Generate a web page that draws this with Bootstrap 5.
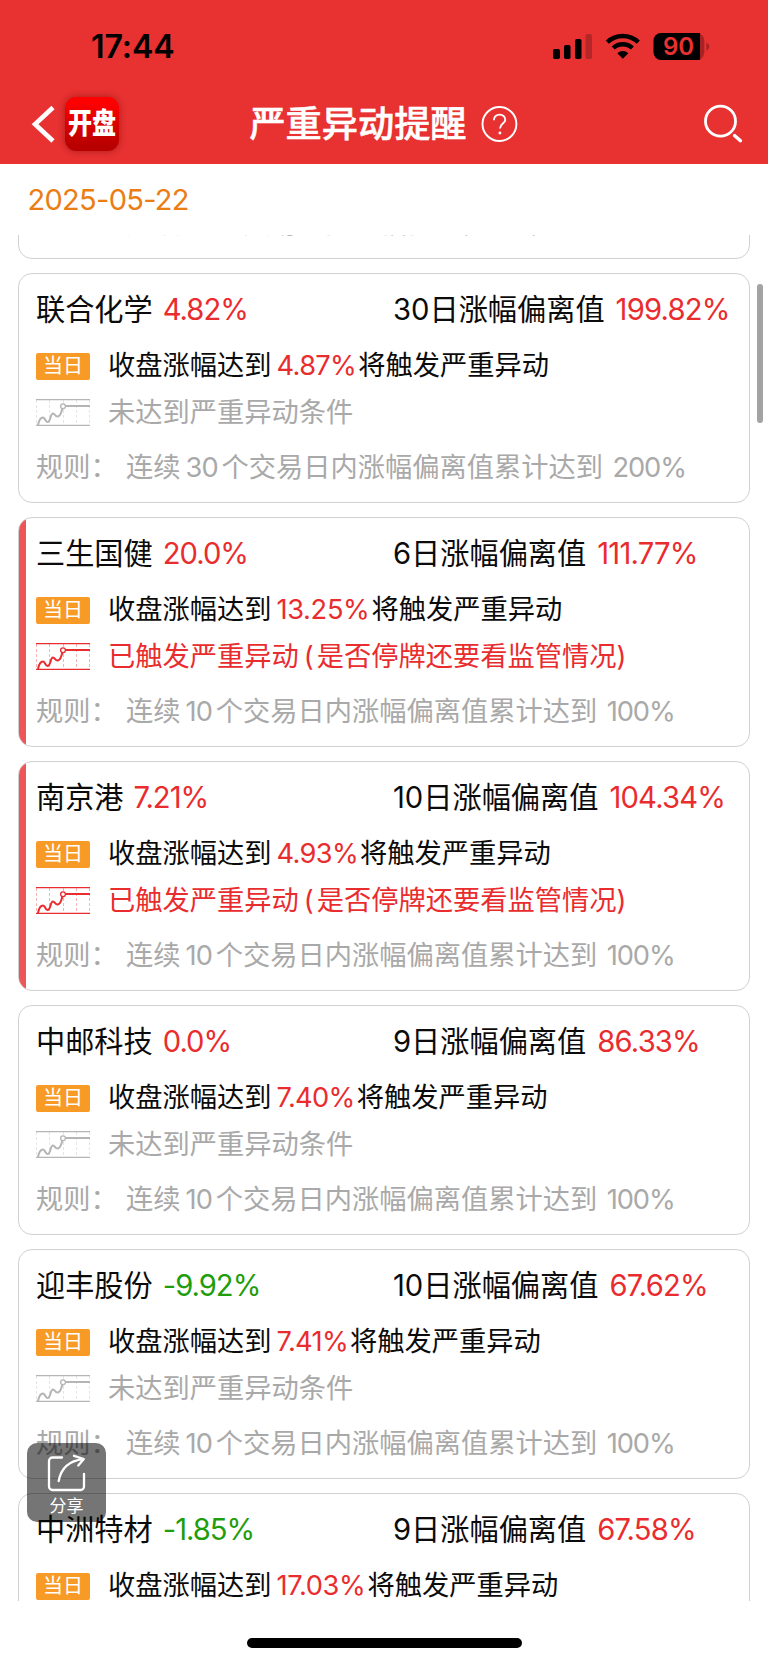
<!DOCTYPE html>
<html lang="zh-CN">
<head>
<meta charset="utf-8">
<meta name="viewport" content="width=device-width, initial-scale=1">
<title>严重异动提醒</title>
<link href="https://cdn.jsdelivr.net/npm/bootstrap@5.3.0/dist/css/bootstrap.min.css" rel="stylesheet">
<style>
  body { width: 768px; height: 1662px; overflow: hidden; background: #fff; color: #0b0b0b; font-family: Inter, "Noto Sans CJK SC", sans-serif; font-size: 27.25px; line-height: 40px; }
  .topbar { height: 163.5px; background: #e83131; color: #fff; }
  .status { height: 85px; padding: 8px 58px 0 91px; color: #000; }
  .clock { font-size: 32.2px; font-weight: 600; letter-spacing: -.1px; }
  .titlebar { height: 78px; padding: 0 25px 0 31px; }
  .app-logo { width: 54px; height: 54px; border-radius: 11px; background: linear-gradient(#ff0000 10%, #b80000 90%); box-shadow: 0 0 7px rgba(90,0,0,.45); font-size: 29px; font-weight: 900; line-height: 54px; }
  .app-logo span { display: block; transform: scaleX(.83); margin: 0 -6px; text-align: center; white-space: nowrap; }
  .title-group { padding-left: 7px; }
  .page-title { font-size: 36.2px; font-weight: 500; line-height: 46px; -webkit-text-stroke: .5px #fff; }
  .date-row { height: 71.5px; padding: 0 27.5px; color: #ea7d14; font-size: 29px; letter-spacing: -.7px; line-height: 71.5px; }
  .feed { height: 1366px; padding: 0 18px; overflow: hidden; }
  .feed-inner { margin-top: -206px; gap: 14px; }
  .stock { height: 230px; flex: none; border: 1px solid #d0d0d0; border-radius: 14px; padding: 8px 17px 0; overflow: hidden; background: #fff; white-space: nowrap; }
  .stock.hit::before { content: ""; position: absolute; left: 0; top: 0; bottom: 0; width: 6.5px; background: #ee5558; }
  .line-head { height: 56px; font-size: 29.2px; }
  .line-head .who { width: 357px; }
  .line-head .num { margin-left: 11px; letter-spacing: -.8px; }
  .line-head .who .num { margin-left: 10px; letter-spacing: -1px; }
  .line-day { height: 56px; }
  .line-state { height: 37px; }
  .line-rule { height: 73px; color: #a9a9a9; }
  .num { color: #e92c2e; letter-spacing: -.65px; }
  .num.down { color: #1f9d0c; }
  .line-day .num { margin: 0 2px 0 5px; }
  .line-day .num.long { letter-spacing: -.35px; }
  .tag { width: 54px; height: 27px; margin-right: 18px; border-radius: 2px; background: #f79a26; color: #fff; font-size: 20px; line-height: 27px; text-align: center; }
  .spark { width: 54px; height: 27px; margin-right: 18px; color: #b5b5b5; flex: none; }
  .muted { color: #a9a9a9; }
  .hit .spark, .alert-text { color: #e92c2e; }
  .paren { margin: 0 3px 0 5px; }
  .rule-label { width: 90px; }
  .days { margin: 0 3.5px 0 5px; letter-spacing: -.8px; }
  .limit { margin-left: 9.5px; letter-spacing: -1.1px; }
  .thumb { left: 757px; top: 284px; width: 6px; height: 139px; border-radius: 3px; background: #a3a3a3; }
  .share { left: 27px; top: 1442.5px; width: 79px; height: 79px; border-radius: 10px; background: rgba(0,0,0,.54); color: #fff; font-size: 17px; line-height: 21px; }
  .home-bar { width: 275px; height: 10px; margin: 37px auto 0; border-radius: 5px; background: #000; }
</style>
</head>
<body class="position-relative">
<svg class="d-none">
  <symbol id="spark" viewBox="0 0 54 27">
    <path d="M.5 1v25M13.5 1v25M27.5 1v25M40.5 1v25M53.5 1v25" fill="none" stroke="currentColor" stroke-width=".8" stroke-dasharray="3 2" opacity=".45"/>
    <path d="M0 .7h54M0 26.3h54" fill="none" stroke="currentColor" stroke-width="1.200"/>
    <path d="M2 26C3 21 4.500 18.500 7 18.500C9.500 18.500 9 23 11.500 23C15 23 14 14.500 17 14.500C19 14.500 19 18 22 17.500C25 17 25 13 26.500 9.500" fill="none" stroke="currentColor" stroke-width="2"/>
    <path d="M29.500 7H54" stroke="currentColor" stroke-width="2.200"/>
    <circle cx="27" cy="7.300" r="2.400" fill="#fff" stroke="currentColor" stroke-width="1.300"/>
  </symbol>
</svg>

<header class="topbar">
  <div class="status d-flex align-items-center justify-content-between">
    <div class="clock">17:44</div>
    <svg width="158" height="30" viewBox="552 31 158 30">
      <rect x="553" y="48" width="7" height="10" rx="1.800"/><rect x="564" y="44" width="6.500" height="14" rx="1.800"/><rect x="575" y="38" width="6.500" height="20" rx="1.800"/><rect x="585.500" y="33" width="6.500" height="25" rx="1.800" opacity=".22"/>
      <g fill="none" stroke="#000" stroke-width="4.400"><path d="M607.300 41.200a22.500 22.500 0 0 1 31 0"/><path d="M613.200 47a14.200 14.200 0 0 1 19.200 0"/></g>
      <path d="M622.800 57.700l-5.500-5.500a8.200 8.200 0 0 1 11 0z"/>
      <path d="M697 32a7 8 0 0 1 7.300 8v11a7 8 0 0 1-7.300 8z" fill="#a52324"/>
      <path d="M661 32h39v27h-39a7.500 7.500 0 0 1-7.500-7.500v-12A7.500 7.500 0 0 1 661 32z"/>
      <path d="M706.300 41.500q6 4 0 8z" fill="#a52324"/>
      <text x="678.500" y="54.200" text-anchor="middle" font-size="24" font-weight="600" fill="#e83131">90</text>
    </svg>
  </div>
  <div class="titlebar position-relative d-flex align-items-center justify-content-between">
    <div class="d-flex align-items-center">
      <svg width="34" height="40" viewBox="0 0 34 40"><path d="M22 3.500L4 20.200L22 37" fill="none" stroke="#fff" stroke-width="4.600"/></svg>
      <div class="app-logo"><span>开盘</span></div>
    </div>
    <div class="title-group position-absolute start-50 translate-middle-x d-flex align-items-center">
      <div class="page-title">严重异动提醒</div>
      <svg class="ms-2 ps-1" width="51" height="40" viewBox="-1 0 51 40"><g fill="none" stroke="#fff" stroke-width="2.100"><circle cx="21.800" cy="20" r="18.400"/><path d="M15.700 16c0-8.500 12.700-7.800 12.400-.5c-.2 4.300-5.700 4-5.700 9.500"/></g><circle cx="22.300" cy="29.800" r="1.600" fill="#fff"/></svg>
    </div>
    <svg width="40" height="40" viewBox="703 104 40 40" fill="none" stroke="#fff"><circle cx="720.500" cy="121.200" r="15" stroke-width="2.800"/><path d="M734.500 135.500l6 5.200" stroke-width="3.400" stroke-linecap="round"/></svg>
  </div>
</header>

<div class="date-row">2025-05-22</div>

<main class="feed">
  <div class="feed-inner d-flex flex-column">

    <section class="stock position-relative">
      <div class="line-head"></div><div class="line-day"></div><div class="line-state"></div>
      <div class="line-rule d-flex align-items-center"><span class="rule-label">规则：</span>连续<span class="days">10</span>个交易日内涨幅偏离值累计达到<span class="limit">100%</span></div>
    </section>

    <section class="stock position-relative">
      <div class="line-head d-flex align-items-center"><div class="who">联合化学<span class="num">4.82%</span></div><div>30日涨幅偏离值<span class="num">199.82%</span></div></div>
      <div class="line-day d-flex align-items-center"><span class="tag">当日</span>收盘涨幅达到<span class="num">4.87%</span>将触发严重异动</div>
      <div class="line-state d-flex align-items-center"><svg class="spark"><use href="#spark"/></svg><span class="muted">未达到严重异动条件</span></div>
      <div class="line-rule d-flex align-items-center"><span class="rule-label">规则：</span>连续<span class="days">30</span>个交易日内涨幅偏离值累计达到<span class="limit">200%</span></div>
    </section>

    <section class="stock hit position-relative">
      <div class="line-head d-flex align-items-center"><div class="who">三生国健<span class="num">20.0%</span></div><div>6日涨幅偏离值<span class="num">111.77%</span></div></div>
      <div class="line-day d-flex align-items-center"><span class="tag">当日</span>收盘涨幅达到<span class="num long">13.25%</span>将触发严重异动</div>
      <div class="line-state d-flex align-items-center"><svg class="spark"><use href="#spark"/></svg><span class="alert-text">已触发严重异动<span class="paren">(</span>是否停牌还要看监管情况)</span></div>
      <div class="line-rule d-flex align-items-center"><span class="rule-label">规则：</span>连续<span class="days">10</span>个交易日内涨幅偏离值累计达到<span class="limit">100%</span></div>
    </section>

    <section class="stock hit position-relative">
      <div class="line-head d-flex align-items-center"><div class="who">南京港<span class="num">7.21%</span></div><div>10日涨幅偏离值<span class="num">104.34%</span></div></div>
      <div class="line-day d-flex align-items-center"><span class="tag">当日</span>收盘涨幅达到<span class="num">4.93%</span>将触发严重异动</div>
      <div class="line-state d-flex align-items-center"><svg class="spark"><use href="#spark"/></svg><span class="alert-text">已触发严重异动<span class="paren">(</span>是否停牌还要看监管情况)</span></div>
      <div class="line-rule d-flex align-items-center"><span class="rule-label">规则：</span>连续<span class="days">10</span>个交易日内涨幅偏离值累计达到<span class="limit">100%</span></div>
    </section>

    <section class="stock position-relative">
      <div class="line-head d-flex align-items-center"><div class="who">中邮科技<span class="num">0.0%</span></div><div>9日涨幅偏离值<span class="num">86.33%</span></div></div>
      <div class="line-day d-flex align-items-center"><span class="tag">当日</span>收盘涨幅达到<span class="num">7.40%</span>将触发严重异动</div>
      <div class="line-state d-flex align-items-center"><svg class="spark"><use href="#spark"/></svg><span class="muted">未达到严重异动条件</span></div>
      <div class="line-rule d-flex align-items-center"><span class="rule-label">规则：</span>连续<span class="days">10</span>个交易日内涨幅偏离值累计达到<span class="limit">100%</span></div>
    </section>

    <section class="stock position-relative">
      <div class="line-head d-flex align-items-center"><div class="who">迎丰股份<span class="num down">-9.92%</span></div><div>10日涨幅偏离值<span class="num">67.62%</span></div></div>
      <div class="line-day d-flex align-items-center"><span class="tag">当日</span>收盘涨幅达到<span class="num">7.41%</span>将触发严重异动</div>
      <div class="line-state d-flex align-items-center"><svg class="spark"><use href="#spark"/></svg><span class="muted">未达到严重异动条件</span></div>
      <div class="line-rule d-flex align-items-center"><span class="rule-label">规则：</span>连续<span class="days">10</span>个交易日内涨幅偏离值累计达到<span class="limit">100%</span></div>
    </section>

    <section class="stock position-relative">
      <div class="line-head d-flex align-items-center"><div class="who">中洲特材<span class="num down">-1.85%</span></div><div>9日涨幅偏离值<span class="num">67.58%</span></div></div>
      <div class="line-day d-flex align-items-center"><span class="tag">当日</span>收盘涨幅达到<span class="num long">17.03%</span>将触发严重异动</div>
    </section>
  </div>
</main>

<div class="home-bar"></div>
<div class="thumb position-absolute"></div>
<div class="share position-absolute d-flex flex-column align-items-center">
  <svg width="79" height="53" viewBox="27 1442.500 79 53" fill="none" stroke="#fff" stroke-width="2.300" stroke-linecap="round" stroke-linejoin="round"><path d="M62 1457h-9.500a3.500 3.500 0 0 0-3.500 3.500v25.500a3.500 3.500 0 0 0 3.500 3.500h28a3.500 3.500 0 0 0 3.500-3.500v-12.500M58.700 1480.500c2-11 9-20 24.500-21.800M74 1455.300l9.800 3.200l-5.500 6.500"/></svg>
  <span>分享</span>
</div>
<script src="https://cdn.jsdelivr.net/npm/bootstrap@5.3.0/dist/js/bootstrap.bundle.min.js"></script>
</body>
</html>
